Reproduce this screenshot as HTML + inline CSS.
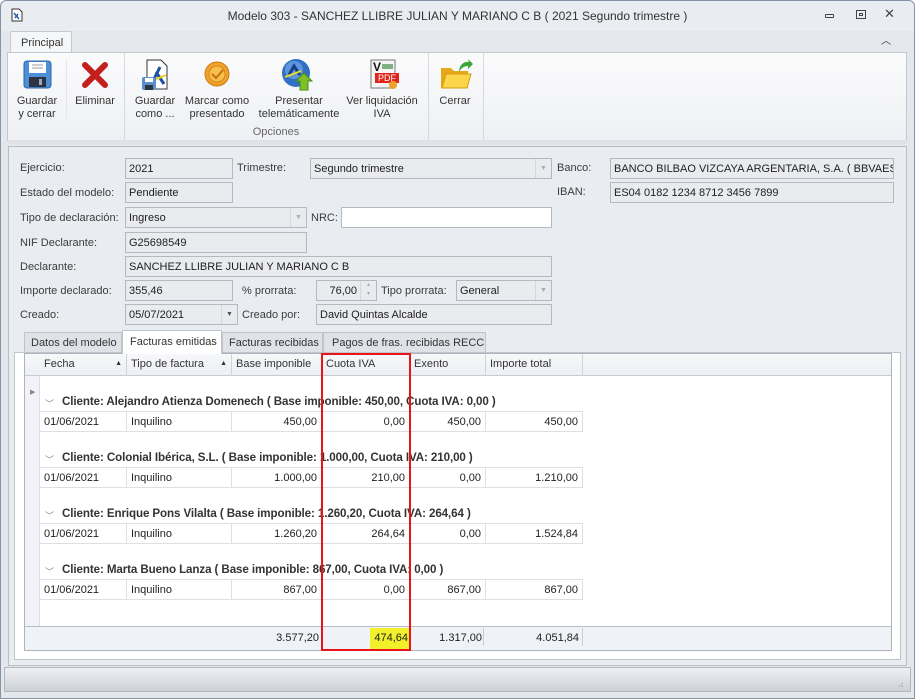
<!DOCTYPE html>
<html><head><meta charset="utf-8"><style>
*{box-sizing:border-box;margin:0;padding:0}
body{width:915px;height:699px;overflow:hidden;background:#fff;font-family:"Liberation Sans",sans-serif;font-size:11px;color:#1e1e1e;position:relative}
.a{position:absolute}
.win{left:0;top:0;width:915px;height:699px;border:1px solid #8593a8;border-radius:6px 6px 0 0;background:#e4e7ec}
.lbl{position:absolute;color:#3b3b3b;font-size:11px}
.in{position:absolute;height:21px;background:#e9ebef;border:1px solid #b4b8bf;padding:4px 0 0 3px;font-size:11px;white-space:nowrap;overflow:hidden}
.dd{position:absolute;right:0;top:0;width:16px;height:100%;border-left:1px solid #d4d7dc;font-size:7px;color:#aaa;text-align:center;line-height:19px}
.rb{position:absolute;text-align:center;font-size:11px;color:#333;line-height:13px}
.th{position:absolute;top:354px;height:22px;border-right:1px solid #d0d4da;padding:4px 0 0 4px;color:#333}
.c{position:absolute;height:20px;border-right:1px solid #dcdfe4;border-bottom:1px solid #dcdfe4;padding:4px 4px 0;white-space:nowrap}
.r{text-align:right}
.g{position:absolute;left:62px;font-weight:bold;color:#333;font-size:11.6px;letter-spacing:-0.1px}
.chev{position:absolute;left:45px;color:#888;font-size:9px}
</style></head><body>
<div class="a win"></div>
<div class="a" style="left:1px;top:1px;width:913px;height:30px;background:#e9ecf0;border-radius:6px 6px 0 0"></div>
<svg class="a" style="left:11px;top:8px" width="12" height="14"><path d="M1 1h7l3 3v9H1z" fill="#fff" stroke="#333"/><path d="M3 5l5 6M4 10l3-4" stroke="#2a5bb0" stroke-width="1.5"/></svg>
<div class="a" style="left:0;width:915px;top:9px;text-align:center;font-size:12px;color:#333">Modelo 303 - SANCHEZ LLIBRE JULIAN Y MARIANO C B ( 2021 Segundo trimestre )</div>
<div class="a" style="left:825px;top:14px;width:9px;height:4px;border:1px solid #444;border-radius:1px"></div>
<div class="a" style="left:856px;top:10px;width:10px;height:9px;border:1px solid #444"><div style="margin:2px;height:3px;border:1px solid #444"></div></div>
<div class="a" style="left:884px;top:6px;font-size:13px;color:#444">✕</div>
<div class="a" style="left:881px;top:32px;font-size:10px;color:#333">︿</div>
<div class="a" style="left:10px;top:31px;width:62px;height:22px;background:#f4f6f8;border:1px solid #c3c9d2;border-bottom:none;border-radius:2px 2px 0 0;padding:5px 0 0 10px;font-size:11px;color:#333">Principal</div>
<div class="a" style="left:7px;top:52px;width:900px;height:89px;background:linear-gradient(#fbfbfc,#eef0f3);border:1px solid #c3c9d2"></div>
<div class="a" style="left:8px;top:140px;width:898px;height:4px;background:#dfe2e7"></div>
<div class="a" style="left:124px;top:53px;width:1px;height:87px;background:#d6dae0"></div>
<div class="a" style="left:428px;top:53px;width:1px;height:87px;background:#d6dae0"></div>
<div class="a" style="left:483px;top:53px;width:1px;height:87px;background:#d6dae0"></div>
<div class="a" style="left:66px;top:60px;width:1px;height:58px;background:#e2e5e9"></div>
<svg class="a" style="left:23px;top:60px" width="30" height="30"><rect x="1" y="1" width="27" height="27" rx="3" fill="#4d8fd6" stroke="#2c66a8"/><rect x="6" y="2" width="17" height="11" fill="#fff"/><path d="M9 5h11M9 8h11" stroke="#999"/><rect x="6" y="17" width="17" height="10" fill="#2b3440"/><rect x="16" y="19" width="3" height="6" fill="#9ab"/></svg>
<svg class="a" style="left:82px;top:62px" width="26" height="26"><path d="M3 3L23 23M23 3L3 23" stroke="#c3201d" stroke-width="6" stroke-linecap="round"/></svg>
<svg class="a" style="left:140px;top:59px" width="32" height="32"><path d="M7 1h14l6 6v23H7z" fill="#fff" stroke="#333"/><path d="M14 20l6-12M16 13l8 12" stroke="#1d4fa0" stroke-width="3"/><path d="M12 22l14-6" stroke="#e8d21a" stroke-width="2"/><rect x="2" y="18" width="14" height="13" rx="2" fill="#5b8fcb"/><rect x="5" y="19" width="8" height="4" fill="#fff"/><rect x="5" y="26" width="8" height="5" fill="#2b3440"/></svg>
<svg class="a" style="left:203px;top:60px" width="28" height="28"><circle cx="14" cy="14" r="12" fill="#f0a12a" stroke="#c97b12"/><circle cx="14" cy="14" r="8" fill="#f6c04b" stroke="#d58a1c"/><path d="M9 14l4 4 7-8" stroke="#c46f10" stroke-width="2" fill="none"/></svg>
<svg class="a" style="left:281px;top:58px" width="34" height="34"><circle cx="15" cy="15" r="14" fill="#2f6fc6"/><circle cx="13" cy="12" r="9" fill="#7fb1ea" opacity=".6"/><path d="M8 17l5-9 6 9" stroke="#183f86" stroke-width="3" fill="none"/><path d="M4 19l16-6" stroke="#e7dd2b" stroke-width="2"/><path d="M23 15l8 8h-4v9h-8v-9h-4z" fill="#7cbf2a" stroke="#4e8a13"/></svg>
<svg class="a" style="left:369px;top:59px" width="32" height="32"><rect x="2" y="1" width="24" height="28" fill="#f5f5f5" stroke="#777"/><text x="4" y="12" font-size="12" font-weight="bold" font-family="Liberation Sans" fill="#111">V</text><rect x="13" y="5" width="11" height="5" fill="#7fb07f"/><rect x="6" y="14" width="24" height="10" fill="#e2231a"/><text x="9" y="22" font-size="9" font-family="Liberation Sans" fill="#fff">PDF</text><circle cx="24" cy="26" r="4" fill="#f0a12a"/></svg>
<svg class="a" style="left:439px;top:58px" width="34" height="34"><path d="M2 10h10l3 3h14v17H2z" fill="#e7a818"/><path d="M3 30l4-14h25l-4 14z" fill="#fbd54a" stroke="#d69d10"/><path d="M20 14c0-7 5-11 10-10l-1-3 5 5-5 5 0-3c-4 0-7 2-9 6z" fill="#3ea53a"/></svg>
<div class="rb" style="left:14px;top:95px;width:46px">Guardar<br>y cerrar</div>
<div class="rb" style="left:72px;top:95px;width:46px">Eliminar</div>
<div class="rb" style="left:131px;top:95px;width:48px">Guardar<br>como ...</div>
<div class="rb" style="left:183px;top:95px;width:68px">Marcar como<br>presentado</div>
<div class="rb" style="left:255px;top:95px;width:88px">Presentar<br>telemáticamente</div>
<div class="rb" style="left:344px;top:95px;width:76px">Ver liquidación<br>IVA</div>
<div class="rb" style="left:432px;top:95px;width:46px">Cerrar</div>
<div class="rb" style="left:124px;top:126px;width:304px;color:#666">Opciones</div>
<div class="a" style="left:8px;top:146px;width:899px;height:520px;background:#e9ecf1;border:1px solid #b9bec6"></div>
<div class="lbl" style="left:20px;top:162px">Ejercicio:</div>
<div class="in" style="left:125px;top:158px;width:108px">2021</div>
<div class="lbl" style="left:237px;top:162px">Trimestre:</div>
<div class="in" style="left:310px;top:158px;width:242px">Segundo trimestre<div class="dd">▼</div></div>
<div class="lbl" style="left:557px;top:162px">Banco:</div>
<div class="in" style="left:610px;top:158px;width:284px">BANCO BILBAO VIZCAYA ARGENTARIA, S.A. ( BBVAESMM</div>
<div class="lbl" style="left:20px;top:187px">Estado del modelo:</div>
<div class="in" style="left:125px;top:182px;width:108px">Pendiente</div>
<div class="lbl" style="left:557px;top:186px">IBAN:</div>
<div class="in" style="left:610px;top:182px;width:284px">ES04 0182 1234 8712 3456 7899</div>
<div class="lbl" style="left:20px;top:212px">Tipo de declaración:</div>
<div class="in" style="left:125px;top:207px;width:182px">Ingreso<div class="dd">▼</div></div>
<div class="lbl" style="left:311px;top:212px">NRC:</div>
<div class="in" style="left:341px;top:207px;width:211px;background:#fff"></div>
<div class="lbl" style="left:20px;top:237px">NIF Declarante:</div>
<div class="in" style="left:125px;top:232px;width:182px">G25698549</div>
<div class="lbl" style="left:20px;top:261px">Declarante:</div>
<div class="in" style="left:125px;top:256px;width:427px">SANCHEZ LLIBRE JULIAN Y MARIANO C B</div>
<div class="lbl" style="left:20px;top:285px">Importe declarado:</div>
<div class="in" style="left:125px;top:280px;width:108px">355,46</div>
<div class="lbl" style="left:242px;top:285px">% prorrata:</div>
<div class="in" style="left:316px;top:280px;width:61px;text-align:right;padding-right:19px">76,00<div class="dd" style="font-size:6px;line-height:9px">▴<br>▾</div></div>
<div class="lbl" style="left:381px;top:285px">Tipo prorrata:</div>
<div class="in" style="left:456px;top:280px;width:96px">General<div class="dd">▼</div></div>
<div class="lbl" style="left:20px;top:309px">Creado:</div>
<div class="in" style="left:125px;top:304px;width:113px">05/07/2021<div class="dd" style="color:#555">▼</div></div>
<div class="lbl" style="left:242px;top:309px">Creado por:</div>
<div class="in" style="left:316px;top:304px;width:236px">David Quintas Alcalde</div>
<div class="a" style="left:24px;top:332px;width:98px;height:21px;background:#dfe3e8;border:1px solid #c0c5cc;padding:4px 0 0 6px;color:#333">Datos del modelo</div>
<div class="a" style="left:122px;top:330px;width:100px;height:24px;background:#fff;border:1px solid #c0c5cc;border-bottom:none;padding:5px 0 0 7px;color:#333;z-index:2">Facturas emitidas</div>
<div class="a" style="left:222px;top:332px;width:101px;height:21px;background:#dfe3e8;border:1px solid #c0c5cc;padding:4px 0 0 6px;color:#333">Facturas recibidas</div>
<div class="a" style="left:323px;top:332px;width:163px;height:21px;background:#dfe3e8;border:1px solid #c0c5cc;padding:4px 0 0 8px;color:#333">Pagos de fras. recibidas RECC</div>
<div class="a" style="left:14px;top:352px;width:887px;height:308px;background:#fff;border:1px solid #c0c5cc"></div>
<div class="a" style="left:24px;top:353px;width:868px;height:298px;background:#fff;border:1px solid #aeb4bc"></div>
<div class="a" style="left:25px;top:354px;width:866px;height:22px;background:linear-gradient(#f7f8fa,#eceff3);border-bottom:1px solid #c8ccd2"></div>
<div class="a" style="left:25px;top:376px;width:15px;height:250px;background:#f1f3f6;border-right:1px solid #dcdfe4"></div>
<div class="a" style="left:30px;top:388px;font-size:7px;color:#888">▶</div>
<div class="th" style="left:40px;width:87px">Fecha<span style="position:absolute;right:4px;font-size:7px;top:6px">▲</span></div>
<div class="th" style="left:127px;width:105px">Tipo de factura<span style="position:absolute;right:4px;font-size:7px;top:6px">▲</span></div>
<div class="th" style="left:232px;width:90px">Base imponible</div>
<div class="th" style="left:322px;width:88px">Cuota IVA</div>
<div class="th" style="left:410px;width:76px">Exento</div>
<div class="th" style="left:486px;width:97px">Importe total</div>

<div class="chev" style="top:397px">﹀</div><div class="g" style="top:395px">Cliente: Alejandro Atienza Domenech ( Base imponible: 450,00, Cuota IVA: 0,00 )</div>
<div class="c" style="left:40px;top:411px;width:87px;border-top:1px solid #dcdfe4;height:21px">01/06/2021</div><div class="c" style="left:127px;top:411px;width:105px;border-top:1px solid #dcdfe4;height:21px">Inquilino</div><div class="c r" style="left:232px;top:411px;width:90px;border-top:1px solid #dcdfe4;height:21px">450,00</div><div class="c r" style="left:322px;top:411px;width:88px;border-top:1px solid #dcdfe4;height:21px">0,00</div><div class="c r" style="left:410px;top:411px;width:76px;border-top:1px solid #dcdfe4;height:21px">450,00</div><div class="c r" style="left:486px;top:411px;width:97px;border-top:1px solid #dcdfe4;height:21px">450,00</div>

<div class="chev" style="top:453px">﹀</div><div class="g" style="top:451px">Cliente: Colonial Ibérica, S.L. ( Base imponible: 1.000,00, Cuota IVA: 210,00 )</div>
<div class="c" style="left:40px;top:467px;width:87px;border-top:1px solid #dcdfe4;height:21px">01/06/2021</div><div class="c" style="left:127px;top:467px;width:105px;border-top:1px solid #dcdfe4;height:21px">Inquilino</div><div class="c r" style="left:232px;top:467px;width:90px;border-top:1px solid #dcdfe4;height:21px">1.000,00</div><div class="c r" style="left:322px;top:467px;width:88px;border-top:1px solid #dcdfe4;height:21px">210,00</div><div class="c r" style="left:410px;top:467px;width:76px;border-top:1px solid #dcdfe4;height:21px">0,00</div><div class="c r" style="left:486px;top:467px;width:97px;border-top:1px solid #dcdfe4;height:21px">1.210,00</div>

<div class="chev" style="top:509px">﹀</div><div class="g" style="top:507px">Cliente: Enrique Pons Vilalta ( Base imponible: 1.260,20, Cuota IVA: 264,64 )</div>
<div class="c" style="left:40px;top:523px;width:87px;border-top:1px solid #dcdfe4;height:21px">01/06/2021</div><div class="c" style="left:127px;top:523px;width:105px;border-top:1px solid #dcdfe4;height:21px">Inquilino</div><div class="c r" style="left:232px;top:523px;width:90px;border-top:1px solid #dcdfe4;height:21px">1.260,20</div><div class="c r" style="left:322px;top:523px;width:88px;border-top:1px solid #dcdfe4;height:21px">264,64</div><div class="c r" style="left:410px;top:523px;width:76px;border-top:1px solid #dcdfe4;height:21px">0,00</div><div class="c r" style="left:486px;top:523px;width:97px;border-top:1px solid #dcdfe4;height:21px">1.524,84</div>

<div class="chev" style="top:565px">﹀</div><div class="g" style="top:563px">Cliente: Marta Bueno Lanza ( Base imponible: 867,00, Cuota IVA: 0,00 )</div>
<div class="c" style="left:40px;top:579px;width:87px;border-top:1px solid #dcdfe4;height:21px">01/06/2021</div><div class="c" style="left:127px;top:579px;width:105px;border-top:1px solid #dcdfe4;height:21px">Inquilino</div><div class="c r" style="left:232px;top:579px;width:90px;border-top:1px solid #dcdfe4;height:21px">867,00</div><div class="c r" style="left:322px;top:579px;width:88px;border-top:1px solid #dcdfe4;height:21px">0,00</div><div class="c r" style="left:410px;top:579px;width:76px;border-top:1px solid #dcdfe4;height:21px">867,00</div><div class="c r" style="left:486px;top:579px;width:97px;border-top:1px solid #dcdfe4;height:21px">867,00</div>

<div class="a" style="left:25px;top:626px;width:866px;height:24px;background:#eff2f6;border-top:1px solid #b9bec6"></div>
<div class="a r" style="left:232px;top:632px;width:87px;text-align:right">3.577,20</div>
<div class="a" style="left:370px;top:628px;width:39px;height:21px;background:#f2f02a"></div>
<div class="a" style="left:322px;top:632px;width:86px;text-align:right">474,64</div>
<div class="a" style="left:410px;top:632px;width:72px;text-align:right">1.317,00</div>
<div class="a" style="left:483px;top:628px;width:1px;height:18px;background:#ccc"></div>
<div class="a" style="left:486px;top:632px;width:93px;text-align:right">4.051,84</div>
<div class="a" style="left:582px;top:628px;width:1px;height:18px;background:#ccc"></div>
<div class="a" style="left:321px;top:353px;width:90px;height:298px;border:2px solid #e8141a;z-index:5"></div>
<div class="a" style="left:4px;top:667px;width:907px;height:25px;background:linear-gradient(#eef0f3,#cdd1d7);border:1px solid #b3b8bf"></div>
<div class="a" style="left:898px;top:680px;font-size:8px;color:#999;letter-spacing:-1px">⠴</div>
</body></html>
